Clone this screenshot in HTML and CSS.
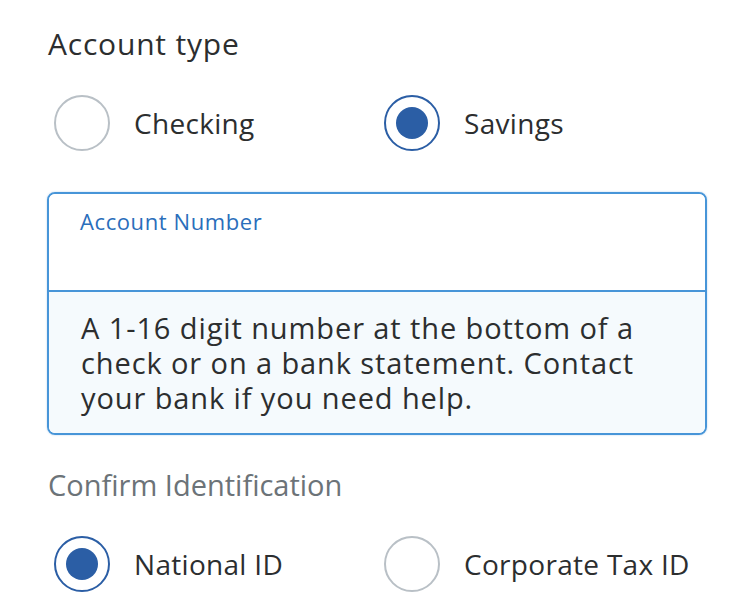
FILE: index.html
```html
<!DOCTYPE html>
<html>
<head>
<meta charset="utf-8">
<link rel="stylesheet" href="styles.css">
</head>
<body>
<div class="form">
  <div class="group-title">Account type</div>
  <div class="radio-row first-row">
    <label class="radio"><span class="dot"></span><span class="radio-label">Checking</span></label>
    <label class="radio"><span class="dot checked"></span><span class="radio-label">Savings</span></label>
  </div>
  <div class="field">
    <div class="field-top"><span class="field-label">Account Number</span></div>
    <div class="field-help">A 1-16 digit number at the bottom of a check or on a bank statement. Contact your bank if you need help.</div>
  </div>
  <div class="group-title muted">Confirm Identification</div>
  <div class="radio-row">
    <label class="radio"><span class="dot checked"></span><span class="radio-label">National ID</span></label>
    <label class="radio"><span class="dot"></span><span class="radio-label">Corporate Tax ID</span></label>
  </div>
</div>
</body>
</html>
```
FILE: styles.css
```css
html, body {
  margin: 0;
  padding: 0;
  background: #ffffff;
}
body {
  font-family: "Open Sans", "Noto Sans", sans-serif;
  color: #2c2e2f;
}
.form {
  padding: 24px 0 0 48px;
  width: 659px;
}
.group-title {
  font-size: 30px;
  line-height: 40px;
  letter-spacing: 0.8px;
  color: #2c2e2f;
}
.group-title.muted {
  font-size: 29px;
  letter-spacing: 0;
  color: #6c7378;
  margin-top: 30px;
}
.radio-row {
  display: flex;
  padding-left: 6px;
  margin-top: 31px;
}
.radio {
  display: flex;
  align-items: center;
  flex: none;
  width: 330px;
  height: 56px;
}
.dot {
  box-sizing: border-box;
  width: 56px;
  height: 56px;
  border-radius: 50%;
  border: 2px solid #b9c0c6;
  flex: none;
  display: flex;
  align-items: center;
  justify-content: center;
}
.dot.checked {
  border-color: #2b5ea5;
}
.dot.checked::after {
  content: "";
  width: 32px;
  height: 32px;
  border-radius: 50%;
  background: #2b5ea5;
}
.radio-label {
  margin-left: 24px;
  font-size: 28px;
  letter-spacing: 0.3px;
  white-space: nowrap;
}
.field {
  margin-top: 41px;
  margin-left: -1px;
  border: 2px solid #4795d8;
  border-radius: 8px;
  overflow: hidden;
  box-shadow: 0 0 2px rgba(70, 140, 210, 0.4);
}
.field-top {
  height: 98px;
  background: #ffffff;
  border-bottom: 2px solid #4795d8;
  box-sizing: border-box;
  padding: 12px 0 0 31px;
}
.field-label {
  font-size: 22px;
  letter-spacing: 0.6px;
  color: #2a6ebb;
}
.field-help {
  background: #f5fafd;
  padding: 18px 50px 18px 32px;
  font-size: 29px;
  line-height: 35px;
  letter-spacing: 0.9px;
  color: #2c2e2f;
}
```
